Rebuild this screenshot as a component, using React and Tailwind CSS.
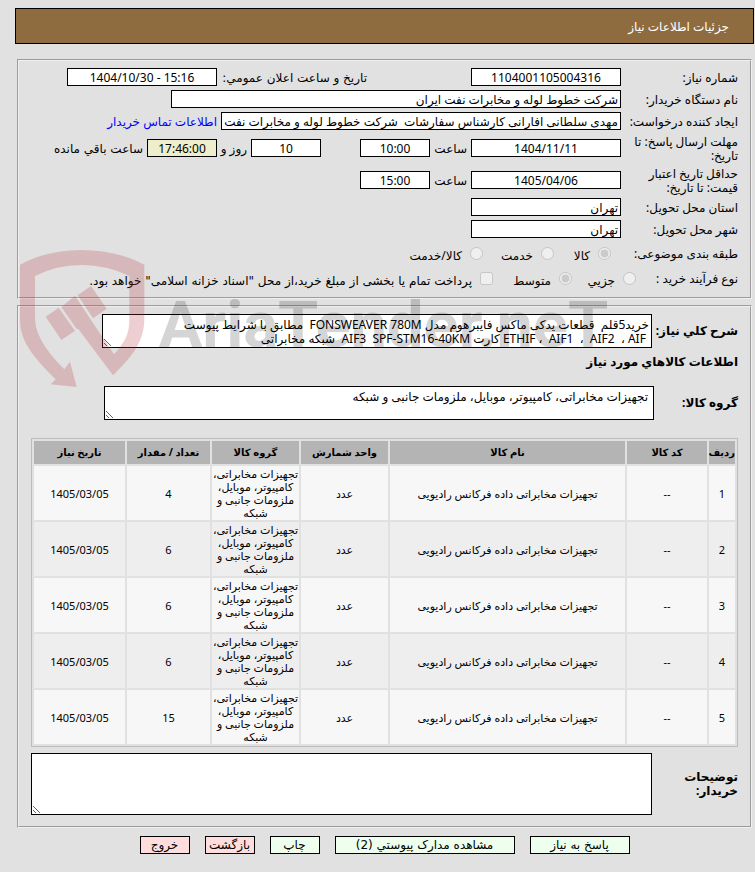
import React from 'react';

const items = [
  { id: 1, count: 4 },
  { id: 2, count: 6 },
  { id: 3, count: 6 },
  { id: 4, count: 6 },
  { id: 5, count: 15 },
];

const description =
  'خرید5قلم  قطعات یدکی ماکس فایبرهوم مدل FONSWEAVER 780M  مطابق با شرایط پیوست\n' +
  ' ETHIF ،  AIF1  ،  AIF2  ، AIF کارت AIF3  SPF-STM16-40KM  شبکه مخابراتی';

const goodsGroup = 'تجهیزات مخابراتی، کامپیوتر، موبایل، ملزومات جانبی و شبکه';

const Field = ({ className = '', ...props }) => (
  <input
    type="text"
    readOnly
    className={`h-[18px] shrink-0 border border-black px-0.5 focus:outline-none ${className}`}
    {...props}
  />
);

const Row = ({ label, htmlFor, className = 'min-h-[22px]', children }) => (
  <div className={`flex items-center ${className}`}>
    <label htmlFor={htmlFor} className="w-[117px] shrink-0 pl-1 pt-0.5">
      {label}
    </label>
    {children}
  </div>
);

const Choice = ({ type = 'radio', name, label, checked = false, className = '' }) => (
  <label className={`flex shrink-0 items-center ${className}`}>
    <input type={type} name={name} defaultChecked={checked} disabled className="m-0 ml-2 h-[13px] w-[13px]" />
    <span className="pt-1">{label}</span>
  </label>
);

const Watermark = () => (
  <svg
    className="pointer-events-none absolute left-2.5 top-60 h-40 w-[600px]"
    viewBox="0 0 1800 480"
    aria-hidden="true"
  >
    <g fill="#ba343c" opacity="0.23">
      <path d="M30 74Q110 30 215 30Q320 30 403 74V236C403 310 360 355 309 406L205 267L200 267L154 201L195 167L243 240L312 343C345 305 358 285 358 236V108Q290 75 215 75Q140 75 75 108V240C78 290 115 340 163 388L180 365L200 441L122 433L137 418C80 360 30 310 30 240Z" />
      <path d="M107 230L146 203L195 272L154 300Z" />
      <path d="M203 166L243 138L290 206L249 235Z" />
    </g>
    <text
      x="446"
      y="320"
      direction="ltr"
      fontSize="195"
      fontWeight="bold"
      fill="#000000"
      opacity="0.16"
      className="font-['Roboto',sans-serif]"
    >
      AriaTender.neT
    </text>
  </svg>
);

const App = () => {
  return (
    <div
      dir="rtl"
      className="relative min-h-screen bg-[#e1e1e1] pb-4 pl-[15px] pr-px pt-2 font-['Noto_Sans','DejaVu_Sans',sans-serif] text-[12px] leading-[14px] text-black"
    >
      <h1 className="flex h-9 items-center border border-black bg-[#8f6c40] px-6 pt-0.5 text-white">
        جزئیات اطلاعات نیاز
      </h1>

      <main className="pl-0.5 pr-0.5">
        {/* Request details */}
        <section className="mt-[15px] border-2 border-[#f0f0f0] pb-[7px] pl-3 pr-3 pt-[5px] [border-style:groove]">
          <Row label="شماره نیاز:" htmlFor="need-no">
            <Field id="need-no" className="w-[150px] bg-white text-center" defaultValue="1104001105004316" />
            <label
              htmlFor="announce"
              className="mr-[104px] w-[150px] shrink-0 whitespace-nowrap pt-0.5 font-['DejaVu_Sans',sans-serif]"
            >
              تاریخ و ساعت اعلان عمومي:
            </label>
            <Field id="announce" className="w-[150px] bg-white text-center" dir="ltr" defaultValue="1404/10/30 - 15:16" />
          </Row>

          <Row label="نام دستگاه خریدار:" htmlFor="buyer">
            <Field id="buyer" className="w-[450px] bg-white" defaultValue="شرکت خطوط لوله و مخابرات نفت ایران" />
          </Row>

          <Row label="ایجاد کننده درخواست:" htmlFor="creator">
            <Field
              id="creator"
              className="w-[400px] bg-white"
              defaultValue="مهدی سلطانی افارانی کارشناس سفارشات  شرکت خطوط لوله و مخابرات نفت"
            />
            <a href="#contact" className="mr-1 whitespace-nowrap pt-0.5 text-[#0000ff]">
              اطلاعات تماس خریدار
            </a>
          </Row>

          <Row label="مهلت ارسال پاسخ: تا تاریخ:" htmlFor="deadline" className="min-h-8">
            <Field id="deadline" className="w-[150px] bg-white text-center" defaultValue="1404/11/11" />
            <label htmlFor="deadline-time" className="w-[41px] shrink-0 pr-1 pt-0.5">ساعت</label>
            <Field id="deadline-time" className="w-[70px] bg-white text-center" defaultValue="10:00" />
            <Field aria-label="روز" className="mr-[39px] w-[70px] bg-white text-center" defaultValue="10" />
            <span className="w-[34px] shrink-0 pr-1 pt-0.5">روز و</span>
            <Field id="remain" className="w-[70px] bg-[#eeeecc] text-center" defaultValue="17:46:00" />
            <label htmlFor="remain" className="whitespace-nowrap pr-1 pt-0.5 font-['DejaVu_Sans',sans-serif]">
              ساعت باقي مانده
            </label>
          </Row>

          <Row label="حداقل تاریخ اعتبار قیمت: تا تاریخ:" htmlFor="validity" className="min-h-8">
            <Field id="validity" className="w-[150px] bg-white text-center" defaultValue="1405/04/06" />
            <label htmlFor="validity-time" className="w-[41px] shrink-0 pr-1 pt-0.5">ساعت</label>
            <Field id="validity-time" className="w-[70px] bg-white text-center" defaultValue="15:00" />
          </Row>

          <Row label="استان محل تحویل:" htmlFor="province">
            <Field id="province" className="w-[150px] bg-white" defaultValue="تهران" />
          </Row>

          <Row label="شهر محل تحویل:" htmlFor="city">
            <Field id="city" className="w-[150px] bg-white" defaultValue="تهران" />
          </Row>

          <div className="flex min-h-[27px] items-center" role="radiogroup" aria-label="طبقه بندی موضوعی">
            <span className="w-[127px] shrink-0">طبقه بندی موضوعی:</span>
            <Choice name="category" label="کالا" checked className="w-[57px]" />
            <Choice name="category" label="خدمت" className="w-[71px]" />
            <Choice name="category" label="کالا/خدمت" />
          </div>

          <div className="flex min-h-[23px] items-center" role="radiogroup" aria-label="نوع فرآیند خرید">
            <span className="w-[102px] shrink-0">نوع فرآیند خرید :</span>
            <Choice name="process" label="جزیي" className="w-16" />
            <Choice name="process" label="متوسط" checked className="w-[79px]" />
            <Choice
              type="checkbox"
              name="treasury"
              label={'پرداخت تمام یا بخشی از مبلغ خرید،از محل "اسناد خزانه اسلامی" خواهد بود.'}
              className="whitespace-nowrap font-['DejaVu_Sans',sans-serif]"
            />
          </div>
        </section>

        {/* Goods */}
        <section className="mt-1.5 border-2 border-[#f0f0f0] pb-[11px] pl-3 pr-3 pt-[7px] [border-style:groove]">
          <div className="flex items-center">
            <label htmlFor="description" className="w-[86px] shrink-0 whitespace-nowrap font-bold">
              شرح کلي نیاز:
            </label>
            <textarea
              id="description"
              readOnly
              className="block h-[34px] w-[550px] overflow-hidden border border-black bg-white px-0.5 py-[3px] focus:outline-none"
              defaultValue={description}
            />
          </div>

          <h2 className="mt-[7px] font-bold">اطلاعات کالاهاي مورد نیاز</h2>

          <div className="mt-[17px] flex items-center">
            <label htmlFor="goods-group" className="w-[84px] shrink-0 whitespace-nowrap font-bold">
              گروه کالا:
            </label>
            <textarea
              id="goods-group"
              readOnly
              className="block h-[34px] w-[550px] overflow-hidden border border-black bg-white px-[5px] py-[3px] focus:outline-none"
              defaultValue={goodsGroup}
            />
          </div>

          <table className="mt-[18px] w-full table-fixed border-separate border-spacing-0.5 border border-[#bbbbbb] text-center text-[11px] leading-[13px]">
            <colgroup>
              <col className="w-[26px]" />
              <col className="w-20" />
              <col />
              <col className="w-[87px]" />
              <col className="w-[87px]" />
              <col className="w-[83px]" />
              <col className="w-[91px]" />
            </colgroup>
            <thead>
              <tr className="h-[23px] bg-[#b4b4b4] text-[10px]">
                <th>ردیف</th>
                <th>کد کالا</th>
                <th>نام کالا</th>
                <th>واحد شمارش</th>
                <th>گروه کالا</th>
                <th>تعداد / مقدار</th>
                <th>تاریخ نیاز</th>
              </tr>
            </thead>
            <tbody>
              {items.map((item) => (
                <tr key={item.id} className="h-[54px] odd:bg-[#f7f7f7] even:bg-[#eeeeee]">
                  <td>{item.id}</td>
                  <td>--</td>
                  <td>تجهیزات مخابراتی داده فرکانس رادیویی</td>
                  <td>عدد</td>
                  <td className="py-px">{goodsGroup}</td>
                  <td>{item.count}</td>
                  <td>1405/03/05</td>
                </tr>
              ))}
            </tbody>
          </table>

          <div className="mt-1.5 flex items-center">
            <label htmlFor="buyer-notes" className="w-[86px] shrink-0 pl-5 font-bold">
              توضیحات خریدار:
            </label>
            <textarea
              id="buyer-notes"
              className="block h-[62px] min-w-0 flex-1 border border-black bg-white p-[3px] focus:outline-none"
            />
          </div>
        </section>

        <div className="mt-2 flex justify-center gap-[15px] font-['DejaVu_Sans',sans-serif]">
          <button type="button" className="h-[18px] w-[100px] border border-black bg-[#eeffee]">پاسخ به نیاز</button>
          <button type="button" className="h-[18px] w-[180px] border border-black bg-[#eeffee]">مشاهده مدارک پیوستي (2)</button>
          <button type="button" className="h-[18px] w-[50px] border border-black bg-[#eeffee]">چاپ</button>
          <button type="button" className="h-[18px] w-[50px] border border-black bg-[#ffdddd]">بازگشت</button>
          <button type="button" className="h-[18px] w-[50px] border border-black bg-[#ffdddd]">خروج</button>
        </div>
      </main>

      <Watermark />
    </div>
  );
};

export default App;
